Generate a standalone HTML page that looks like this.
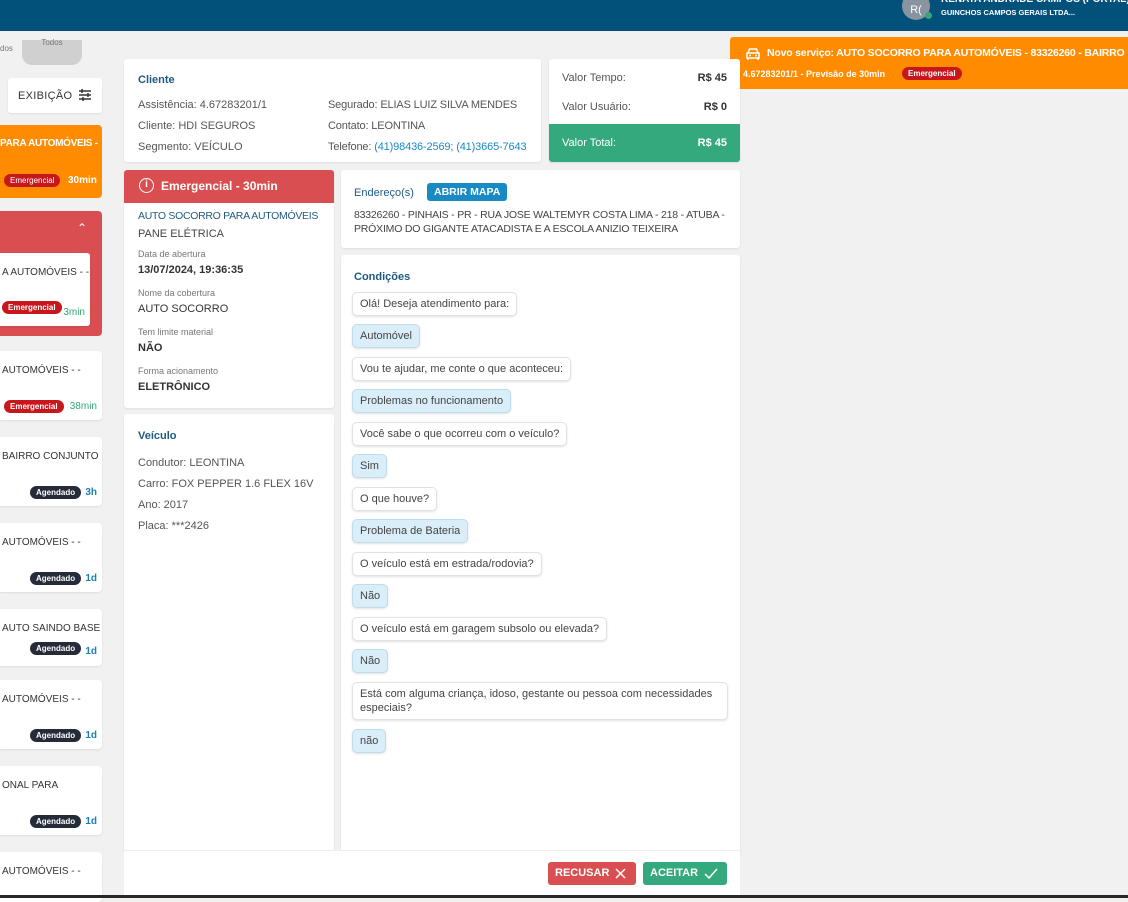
<!DOCTYPE html>
<html><head><meta charset="utf-8"><style>
*{box-sizing:border-box;margin:0;padding:0}
body{width:1128px;height:898px;overflow:hidden;background:#f1f1f1;font-family:"Liberation Sans",sans-serif;font-size:11px;color:#555;position:relative}
.a{position:absolute}
.card{position:absolute;background:#fff;border-radius:3px;box-shadow:0 1px 2px rgba(0,0,0,.08)}
.t{color:#1f5a80;font-weight:bold;font-size:11px}
.bd{display:inline-block;border-radius:9px;color:#fff;font-size:9px;padding:2px 6px;font-weight:bold}
.em{background:#c8161d}
.ag{background:#262b3a}
.b{position:absolute;left:352px;background:#fff;border:1px solid #e2e2e2;border-radius:5px;box-shadow:0 1px 2px rgba(0,0,0,.12);padding:5px 7px;font-size:11px;color:#444;white-space:nowrap}
.r{background:#d9eef8;border-color:#bedcec}
.lc{position:absolute;left:0;width:102px;background:#fff;border-radius:0 4px 4px 0;box-shadow:0 1px 2px rgba(0,0,0,.08);font-size:10px;color:#333;overflow:hidden}
.lc .x{position:absolute;left:2px;top:14px;white-space:nowrap}
.lc .y{position:absolute;right:5px;bottom:8px;white-space:nowrap;font-size:10px;font-weight:bold}
</style></head><body>
<div class="a" style="left:0;top:0;width:1128px;height:31px;background:#02517b"></div>
<div class="a" style="left:902px;top:-8px;width:28px;height:28px;border-radius:50%;background:#8a94a0;color:#fff;font-size:11px;text-align:center;line-height:36px">R(</div>
<div class="a" style="left:925px;top:12px;width:7px;height:7px;border-radius:50%;background:#35a776"></div>
<div class="a" style="left:941px;top:-6px;color:#fff;font-size:10px;font-weight:bold;white-space:nowrap">RENATA ANDRADE CAMPOS (PORTAL)</div>
<div class="a" style="left:941px;top:8px;color:#fff;font-size:7.5px;font-weight:bold">GUINCHOS CAMPOS GERAIS LTDA...</div>

<!-- toast -->
<div class="a" style="left:730px;top:37px;width:398px;height:52px;background:#ff8c00;border-radius:3px 0 0 3px"></div>
<svg class="a" style="left:745px;top:47px" width="16" height="14" viewBox="0 0 16 14"><path d="M3 6 L4.5 2 H11.5 L13 6 M2 6 H14 V11 H2 Z M3 11 V13 M13 11 V13" stroke="#fff" stroke-width="1.5" fill="none"/><circle cx="5" cy="8.5" r="1" fill="#fff"/><circle cx="11" cy="8.5" r="1" fill="#fff"/></svg>
<div class="a" style="left:767px;top:47px;color:#fff;font-size:10.5px;font-weight:bold;white-space:nowrap;letter-spacing:-.2px">Novo serviço: AUTO SOCORRO PARA AUTOMÓVEIS - 83326260 - BAIRRO</div>
<div class="a" style="left:743px;top:69px;color:#fff;font-size:9px;font-weight:bold">4.67283201/1 - Previsão de 30min</div>
<div class="a bd em" style="left:902px;top:67px;font-size:8px">Emergencial</div>

<!-- sidebar -->
<div class="a" style="left:0;top:44px;font-size:8px;color:#777">dos</div>
<div class="a" style="left:22px;top:40px;width:60px;height:25px;background:#d0d0d0;border-radius:0 0 10px 10px;font-size:8px;color:#777;text-align:center;line-height:6px">Todos</div>
<div class="card" style="left:8px;top:78px;width:94px;height:35px"><span class="a" style="left:10px;top:12px;font-size:11px;color:#333;letter-spacing:.3px">EXIBIÇÃO</span>
<svg class="a" style="left:70px;top:10px" width="14" height="14" viewBox="0 0 14 14" stroke="#333" stroke-width="1.5"><path d="M1 3H13M1 7H13M1 11H13M4 1V5M10 5V9M5 9V13"/></svg></div>
<div class="a" style="left:0;top:125px;width:102px;height:73px;background:#ff8c00;border-radius:0 4px 4px 0;color:#fff;font-weight:bold;font-size:10px"><span class="a" style="left:0;top:13px;white-space:nowrap;letter-spacing:-.3px">PARA AUTOMÓVEIS -</span><span class="a bd em" style="left:4px;top:49px;font-size:8px;font-weight:normal">Emergencial</span><span class="a" style="left:68px;top:50px">30min</span></div>
<div class="a" style="left:0;top:211px;width:102px;height:125px;background:#d94f51;border-radius:0 4px 4px 0"><span class="a" style="left:77px;top:10px;color:#fff;font-size:12px">&#8963;</span></div>
<div class="lc" style="top:253px;width:90px;height:73px;border-radius:0 3px 3px 0"><span class="x">A AUTOMÓVEIS - -</span><span class="a bd em" style="left:2px;top:48px;font-size:8px">Emergencial</span><span class="y" style="color:#35a776;font-weight:normal">3min</span></div>
<div class="lc" style="top:351px;height:69px"><span class="x">AUTOMÓVEIS - -</span><span class="a bd em" style="left:4px;top:49px;font-size:8px">Emergencial</span><span class="y" style="color:#35a776;font-weight:normal">38min</span></div>
<div class="lc" style="top:437px;height:69px"><span class="x">BAIRRO CONJUNTO</span><span class="a bd ag" style="left:30px;top:49px;font-size:8px">Agendado</span><span class="y" style="color:#1a7fb5">3h</span></div>
<div class="lc" style="top:523px;height:69px"><span class="x">AUTOMÓVEIS - -</span><span class="a bd ag" style="left:30px;top:49px;font-size:8px">Agendado</span><span class="y" style="color:#1a7fb5">1d</span></div>
<div class="lc" style="top:609px;height:57px"><span class="x">AUTO SAINDO BASE</span><span class="a bd ag" style="left:30px;top:33px;font-size:8px">Agendado</span><span class="y" style="color:#1a7fb5;bottom:9px">1d</span></div>
<div class="lc" style="top:680px;height:69px"><span class="x">AUTOMÓVEIS - -</span><span class="a bd ag" style="left:30px;top:49px;font-size:8px">Agendado</span><span class="y" style="color:#1a7fb5">1d</span></div>
<div class="lc" style="top:766px;height:69px"><span class="x">ONAL PARA</span><span class="a bd ag" style="left:30px;top:49px;font-size:8px">Agendado</span><span class="y" style="color:#1a7fb5">1d</span></div>
<div class="lc" style="top:852px;height:50px"><span class="x">AUTOMÓVEIS - -</span></div>

<!-- cliente -->
<div class="card" style="left:124px;top:59px;width:417px;height:103px">
<div class="a t" style="left:14px;top:15px">Cliente</div>
<div class="a" style="left:14px;top:36px;line-height:21px">Assistência: 4.67283201/1<br>Cliente: HDI SEGUROS<br>Segmento: VEÍCULO</div>
<div class="a" style="left:204px;top:36px;line-height:21px;white-space:nowrap;letter-spacing:-.15px">Segurado: ELIAS LUIZ SILVA MENDES<br>Contato: LEONTINA<br>Telefone: <span style="color:#1a8ac5">(41)98436-2569; (41)3665-7643</span></div>
</div>
<div class="card" style="left:549px;top:59px;width:191px;height:103px;overflow:hidden">
<div class="a" style="left:13px;top:13px">Valor Tempo:</div><div class="a" style="right:13px;top:13px;font-weight:bold;color:#333">R$ 45</div>
<div class="a" style="left:13px;top:42px">Valor Usuário:</div><div class="a" style="right:13px;top:42px;font-weight:bold;color:#333">R$ 0</div>
<div class="a" style="left:0;top:65px;width:191px;height:38px;background:#34a97d;color:#fff"><span class="a" style="left:13px;top:13px">Valor Total:</span><span class="a" style="right:13px;top:13px;font-weight:bold">R$ 45</span></div>
</div>

<!-- emergencial -->
<div class="card" style="left:124px;top:170px;width:210px;height:238px;overflow:hidden">
<div class="a" style="left:0;top:0;width:210px;height:33px;background:#d94f51;color:#fff;font-weight:bold;font-size:12px"><span class="a" style="left:15px;top:8px;width:15px;height:15px;border:1.5px solid #fff;border-radius:50%;font-size:10px;text-align:center;line-height:12px">i</span><span class="a" style="left:37px;top:9px">Emergencial - 30min</span></div>
<div class="a" style="left:14px;top:40px;color:#1f5a80;font-size:10.5px;white-space:nowrap;letter-spacing:-.3px">AUTO SOCORRO PARA AUTOMÓVEIS</div>
<div class="a" style="left:14px;top:58px;color:#444">PANE ELÉTRICA</div>
<div class="a" style="left:14px;top:79px;font-size:9px;color:#777">Data de abertura</div>
<div class="a" style="left:14px;top:94px;font-weight:bold;color:#333">13/07/2024, 19:36:35</div>
<div class="a" style="left:14px;top:118px;font-size:9px;color:#777">Nome da cobertura</div>
<div class="a" style="left:14px;top:133px;color:#333">AUTO SOCORRO</div>
<div class="a" style="left:14px;top:157px;font-size:9px;color:#777">Tem limite material</div>
<div class="a" style="left:14px;top:172px;color:#333;font-weight:bold">NÃO</div>
<div class="a" style="left:14px;top:196px;font-size:9px;color:#777">Forma acionamento</div>
<div class="a" style="left:14px;top:211px;color:#333;font-weight:bold">ELETRÔNICO</div>
</div>
<div class="card" style="left:124px;top:414px;width:210px;height:440px">
<div class="a t" style="left:14px;top:16px">Veículo</div>
<div class="a" style="left:14px;top:39px;line-height:21px;white-space:nowrap">Condutor: LEONTINA<br>Carro: FOX PEPPER 1.6 FLEX 16V<br>Ano: 2017<br>Placa: ***2426</div>
</div>

<!-- endereco -->
<div class="card" style="left:341px;top:170px;width:399px;height:78px">
<div class="a t" style="left:13px;top:17px;font-weight:normal;color:#1f5a80">Endereço(s)</div>
<div class="a" style="left:86px;top:13px;background:#1a8ac5;color:#fff;font-weight:bold;font-size:10.5px;padding:3px 7px;border-radius:3px">ABRIR MAPA</div>
<div class="a" style="left:13px;top:38px;font-size:10.5px;line-height:14px;color:#444;white-space:nowrap;letter-spacing:-.2px">83326260 - PINHAIS - PR - RUA JOSE WALTEMYR COSTA LIMA - 218 - ATUBA -<br>PRÓXIMO DO GIGANTE ATACADISTA E A ESCOLA ANIZIO TEIXEIRA</div>
</div>
<div class="card" style="left:341px;top:255px;width:399px;height:600px">
<div class="a t" style="left:13px;top:16px">Condições</div>
</div>
<div class="b" style="top:292px">Olá! Deseja atendimento para:</div>
<div class="b r" style="top:324px">Automóvel</div>
<div class="b" style="top:357px">Vou te ajudar, me conte o que aconteceu:</div>
<div class="b r" style="top:389px">Problemas no funcionamento</div>
<div class="b" style="top:422px">Você sabe o que ocorreu com o veículo?</div>
<div class="b r" style="top:454px">Sim</div>
<div class="b" style="top:487px">O que houve?</div>
<div class="b r" style="top:519px">Problema de Bateria</div>
<div class="b" style="top:552px">O veículo está em estrada/rodovia?</div>
<div class="b r" style="top:584px">Não</div>
<div class="b" style="top:617px">O veículo está em garagem subsolo ou elevada?</div>
<div class="b r" style="top:649px">Não</div>
<div class="b" style="top:682px;width:376px;white-space:normal;line-height:14px;padding:4px 7px">Está com alguma criança, idoso, gestante ou pessoa com necessidades especiais?</div>
<div class="b r" style="top:729px">não</div>

<!-- footer -->
<div class="a" style="left:124px;top:850px;width:616px;height:48px;background:#fff;border-top:1px solid #eee"></div>
<div class="a" style="left:548px;top:862px;width:88px;height:23px;background:#d94f51;border-radius:3px;color:#fff;font-weight:bold;font-size:11px"><span class="a" style="left:7px;top:5px">RECUSAR</span><svg class="a" style="left:67px;top:6px" width="11" height="11"><path d="M1 1L10 10M10 1L1 10" stroke="#fff" stroke-width="1.5"/></svg></div>
<div class="a" style="left:643px;top:862px;width:84px;height:23px;background:#34a97d;border-radius:3px;color:#fff;font-weight:bold;font-size:11px"><span class="a" style="left:7px;top:5px">ACEITAR</span><svg class="a" style="left:61px;top:6px" width="14" height="11"><path d="M1 6L5 10L13 1" stroke="#fff" stroke-width="1.5" fill="none"/></svg></div>
<div class="a" style="left:0;top:895px;width:1128px;height:3px;background:#2a2623"></div>
</body></html>
